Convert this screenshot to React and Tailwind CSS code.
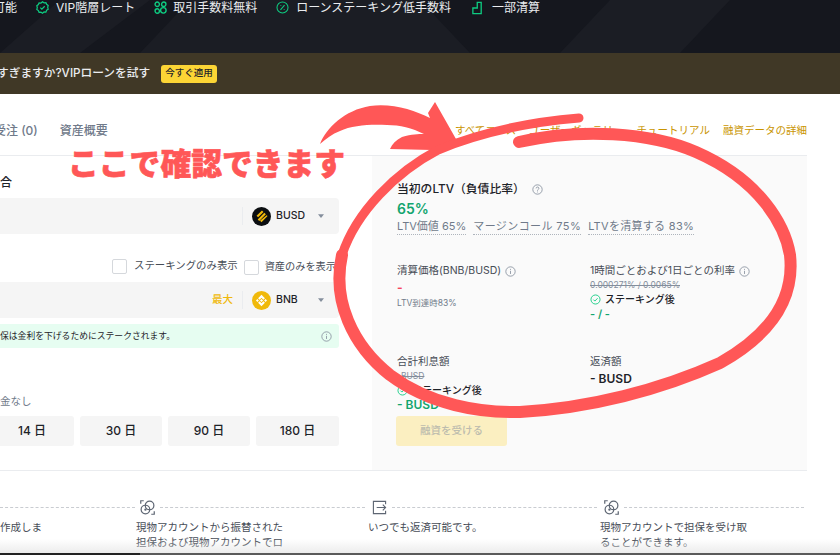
import React from "react";

const Check = ({ className = "w-[13px] h-[13px]" }) => (
  <svg viewBox="0 0 16 16" className={className} fill="none" stroke="#0ecb81" strokeWidth="1.3">
    <circle cx="8" cy="8" r="6.6" />
    <path d="M5 8.2l2.1 2.1L11 6.2" />
  </svg>
);
const Info = ({ q }) => (
  <svg viewBox="0 0 16 16" className="w-[11px] h-[11px] shrink-0" fill="none" stroke="#848e9c" strokeWidth="1.2">
    <circle cx="8" cy="8" r="6.8" />
    {q ? (
      <path d="M6 6.4a2 2 0 1 1 3 1.7c-.7.4-1 .8-1 1.6M8 11v1.2" />
    ) : (
      <path d="M8 7v4.6M8 4.2v1.4" />
    )}
  </svg>
);
const Caret = () => (
  <svg viewBox="0 0 8 5" className="w-[6px] h-[4px]">
    <path d="M0 0h8L4 5z" fill="#848e9c" />
  </svg>
);
const Busd = () => (
  <svg viewBox="0 0 20 20" className="w-[19px] h-[19px]">
    <circle cx="10" cy="10" r="10" fill="#0b0e11" />
    <path d="M10.500 3.600l1.600 1.600-5.700 5.700-1.600-1.600zM13 6.100l1.600 1.600-7 7L6 13.100zM15.400 8.600l1 1-6.400 6.400-1.600-1.600z" fill="#f0b90b" />
  </svg>
);
const Bnb = () => (
  <svg viewBox="0 0 20 20" className="w-[19px] h-[19px]">
    <circle cx="10" cy="10" r="10" fill="#f0b90b" />
    <path d="M10 4l1.600 1.600L8 9.200 6.400 7.600zM10 4l3.600 3.600-1.600 1.600-3.600-3.600zM4.200 10l1.500-1.500L7.200 10l-1.500 1.500zM12.800 10l1.500-1.500 1.500 1.500-1.500 1.500zM10 8.400l1.600 1.600-1.600 1.600L8.400 10zM6.400 12.400L8 10.800l2 2 2-2 1.600 1.600L10 16z" fill="#fff" />
  </svg>
);
const Swap = () => (
  <svg viewBox="0 0 16 16" className="w-[15px] h-[15px] shrink-0" fill="none" stroke="#5e6673" strokeWidth="1.300">
    <circle cx="10.200" cy="5.800" r="4.600" />
    <circle cx="5.800" cy="10.200" r="4.600" />
    <circle cx="5.800" cy="10.200" r=".6" fill="#5e6673" />
    <path d="M.8 4V.8h3.200M15.200 12v3.200H12" />
  </svg>
);
const Exit = () => (
  <svg viewBox="0 0 16 16" className="w-[15px] h-[15px] shrink-0" fill="none" stroke="#5e6673" strokeWidth="1.200">
    <path d="M14.500 4.500V1.500h-13v13h13v-3M5 8h9.500M11.500 5l3 3-3 3" />
  </svg>
);

const Topic = ({ icon, gap, children }) => (
  <div className={`flex items-center ${gap}`}>
    {icon}
    <span>{children}</span>
  </div>
);

const After = () => (
  <div className="flex items-center gap-[4px] text-[10px] font-medium text-[#1e2329] leading-[15px]">
    <Check className="w-[11px] h-[11px]" />
    <span>ステーキング後</span>
  </div>
);

const Step = ({ icon, children }) => (
  <div>
    <div className="flex items-center h-[15px] pl-[4px]">
      {icon}
      <div className="flex-1 ml-[5px] mr-[3px] border-t border-dashed border-[#c9ccd1]" />
    </div>
    <div className="mt-[5px] text-[10.500px] leading-[15px] text-[#474d57] whitespace-nowrap">{children}</div>
  </div>
);

const Term = ({ children, className }) => (
  <div className={`h-[30px] rounded-[3px] bg-[#f5f5f5] flex items-center justify-center text-[12px] font-medium text-[#1e2329] ${className}`}>
    {children}
  </div>
);

export default function App() {
  return (
    <div className="relative w-[840px] h-[560px] overflow-hidden bg-white font-['Inter','Noto_Sans_CJK_JP',sans-serif]">
      {/* Hero */}
      <div className="relative h-[53px] bg-[#15171e] overflow-hidden">
        <svg className="absolute inset-0 w-full h-full" viewBox="0 0 840 53">
          <path d="M0 53L60 0h90L80 53zM140 53l50-53h230L470 53zM560 53L610 0h120l-50 53z" fill="#1b1d24" />
        </svg>
        <div className="relative flex items-center gap-[19px] -ml-[7px] h-[15px] text-[12px] leading-[15px] text-[#eaecef]">
          <span className="w-[24px]">可能</span>
          <Topic
            gap="gap-[7px]"
            icon={
              <svg viewBox="0 0 16 16" className="w-[13px] h-[13px]" fill="none" stroke="#0ecb81" strokeWidth="1.500">
                <path d="M8 1l1.900 1.200 2.300-.1.900 2 1.900 1.400-.6 2.300.6 2.300-1.900 1.300-.9 2.200-2.300-.1L8 15l-1.900-1.200-2.300.1-.9-2.100L1 10.400l.6-2.300L1 5.800l1.900-1.400.9-2 2.300.1z" />
                <path d="M5.300 8.200l1.900 1.900 3.500-3.600" />
              </svg>
            }
          >
            VIP階層レート
          </Topic>
          <Topic
            gap="gap-[6px]"
            icon={
              <svg viewBox="0 0 16 16" className="w-[13px] h-[13px]" fill="none" stroke="#0ecb81" strokeWidth="1.700">
                <circle cx="4" cy="4" r="2.700" />
                <circle cx="12" cy="4" r="2.700" />
                <circle cx="4" cy="12.300" r="2.700" />
                <circle cx="11.500" cy="11.500" r="3.400" />
              </svg>
            }
          >
            取引手数料無料
          </Topic>
          <Topic
            gap="gap-[7px]"
            icon={
              <svg viewBox="0 0 16 16" className="w-[13px] h-[13px]" fill="none" stroke="#0ecb81" strokeWidth="1.300">
                <circle cx="8" cy="8" r="6.800" />
                <path d="M10.500 5l-5 6M5.500 5.500h1M9.500 10.500h1" />
              </svg>
            }
          >
            ローンステーキング低手数料
          </Topic>
          <div className="ml-[2px]">
            <Topic
              gap="gap-[6px]"
              icon={
                <svg viewBox="0 0 16 16" className="w-[14px] h-[14px]" fill="none" stroke="#0ecb81" strokeWidth="1.500">
                  <path d="M1 14.500h9.500V1.500H6v6.500H1z" />
                </svg>
              }
            >
              一部清算
            </Topic>
          </div>
        </div>
      </div>

      {/* Banner */}
      <div className="relative h-[41px] bg-[#403826] flex items-center gap-[11px] -ml-[3px] text-[11.700px] font-medium text-[#eaecef]">
        <span>すぎますか?VIPローンを試す</span>
        <div className="h-[18px] w-[56px] rounded-[3px] bg-[#fcd535] flex items-center justify-center text-[9.500px] font-medium text-[#1e2329]">
          今すぐ適用
        </div>
      </div>

      {/* Tabs */}
      <div className="w-[807px] h-[62px] pt-[28px] flex justify-between border-b border-[#eaecef]">
        <div className="-ml-[6px] flex gap-[22px] text-[12px] leading-[18px] font-medium text-[#707a8a]">
          <span>受注 (0)</span>
          <span>資産概要</span>
        </div>
        <div className="flex gap-[13px] text-[10.500px] leading-[18px] text-[#c99400]">
          <span>すべてコース</span>
          <span>ユーザーギャラリー</span>
          <span>チュートリアル</span>
          <span>融資データの詳細</span>
        </div>
      </div>

      {/* Main */}
      <div className="w-[807px] h-[315px] flex gap-[33px] border-b border-[#eaecef]">
        <div className="w-[339px] shrink-0 pt-[19px]">
          <div className="text-[12px] leading-[16px] font-medium text-[#1e2329]">合</div>
          <div className="mt-[7px] h-[36px] rounded-r-[4px] bg-[#f5f5f5] flex items-center justify-end">
            <div className="w-px h-[18px] bg-[#eaecef]" />
            <div className="ml-[9px]"><Busd /></div>
            <span className="ml-[5px] w-[42px] text-[10.500px] font-medium text-[#1e2329]">BUSD</span>
            <div className="mr-[15px] flex"><Caret /></div>
          </div>
          <div className="mt-[24px] h-[16px] flex items-center justify-end text-[10.400px] text-[#474d57] whitespace-nowrap">
            <span className="w-[15px] h-[15px] rounded-[2px] border border-[#d5d8dc] bg-white" />
            <span className="ml-[7px] mr-[6px]">ステーキングのみ表示</span>
            <span className="mt-[2px] w-[15px] h-[15px] rounded-[2px] border border-[#d5d8dc] bg-white" />
            <span className="mt-[2px] ml-[6px] mr-[3px] text-[10.200px]">資産のみを表示</span>
          </div>
          <div className="mt-[8px] h-[36px] rounded-r-[4px] bg-[#f5f5f5] flex items-center justify-end">
            <span className="mr-[9px] text-[10.500px] font-medium text-[#f0b90b]">最大</span>
            <div className="w-px h-[18px] bg-[#eaecef]" />
            <div className="ml-[9px]"><Bnb /></div>
            <span className="ml-[5px] w-[42px] text-[10.500px] font-medium text-[#1e2329]">BNB</span>
            <div className="mr-[15px] flex"><Caret /></div>
          </div>
          <div className="mt-[6px] h-[24px] rounded-r-[3px] bg-[#e6fdf1] flex items-center justify-between pr-[7px] text-[8.800px] text-[#1e2329]">
            <span>保は金利を下げるためにステークされます。</span>
            <Info />
          </div>
          <div className="mt-[46px] text-[10.500px] leading-[16px] text-[#707a8a]">金なし</div>
          <div className="mt-[6px] flex gap-[6px] -ml-[10px]">
            <Term className="w-[84px]">14 日</Term>
            <Term className="w-[82px]">30 日</Term>
            <Term className="w-[82px]">90 日</Term>
            <Term className="w-[83px]">180 日</Term>
          </div>
        </div>

        <div className="flex-1 bg-[#fafafa] pl-[25px] pt-[25px]">
          <div className="flex items-center gap-[7px] text-[11.800px] leading-[16px] font-medium text-[#1e2329]">
            <span>当初のLTV（負債比率）</span>
            <Info q />
          </div>
          <div className="mt-[3px] text-[14px] leading-[18px] font-semibold text-[#12a56f]">65%</div>
          <div className="mt-[1px] flex gap-[7px] text-[11px] leading-[15px] text-[#707a8a]">
            <span className="border-b border-dotted border-[#aeb4bc]">LTV価値 65%</span>
            <span className="border-b border-dotted border-[#aeb4bc] tracking-[0.4px]">マージンコール 75%</span>
            <span className="border-b border-dotted border-[#aeb4bc] tracking-[0.3px]">LTVを清算する 83%</span>
          </div>
          <div className="mt-[28px] grid grid-cols-[193px_1fr] h-[91px]">
            <div>
              <div className="flex items-center gap-[4px] text-[10.500px] leading-[16px] text-[#474d57]">
                <span>清算価格(BNB/BUSD)</span>
                <Info />
              </div>
              <div className="mt-[1px] text-[12px] leading-[16px] font-bold text-[#f6465d]">-</div>
              <div className="text-[8.500px] leading-[14px] text-[#707a8a]">LTV到達時83%</div>
            </div>
            <div>
              <div className="flex items-center gap-[4px] text-[10.500px] leading-[16px] text-[#474d57]">
                <span>1時間ごとおよび1日ごとの利率</span>
                <Info />
              </div>
              <div className="text-[8.500px] leading-[13px] text-[#848e9c] line-through">0.000271% / 0.0065%</div>
              <After />
              <div className="text-[11px] leading-[15px] font-semibold text-[#12a56f]">- / -</div>
            </div>
          </div>
          <div className="grid grid-cols-[193px_1fr]">
            <div>
              <div className="text-[10.500px] leading-[16px] text-[#474d57]">合計利息額</div>
              <div className="text-[8.500px] leading-[13px] text-[#848e9c] line-through">-BUSD</div>
              <After />
              <div className="-mt-[1px] text-[12px] leading-[15px] font-semibold text-[#12a56f]">- BUSD</div>
            </div>
            <div>
              <div className="text-[10.500px] leading-[16px] text-[#474d57]">返済額</div>
              <div className="text-[12px] leading-[17px] font-semibold text-[#1e2329]">- BUSD</div>
            </div>
          </div>
          <div className="mt-[4px] -ml-[1px] w-[111px] h-[30px] rounded-[3px] bg-[#fbefc1] flex items-center justify-center text-[10.500px] font-medium text-[#bdbcae]">
            融資を受ける
          </div>
        </div>
      </div>

      {/* Steps */}
      <div className="w-[807px] h-[82px] pt-[29px] grid grid-cols-[136px_232px_232px_1fr] overflow-hidden">
        <div>
          <div className="flex items-center h-[15px]">
            <div className="flex-1 mr-[1px] border-t border-dashed border-[#c9ccd1]" />
          </div>
          <div className="mt-[5px] text-[10.500px] leading-[15px] text-[#474d57]">作成しま</div>
        </div>
        <Step icon={<Swap />}>
          現物アカウントから振替された
          <br />
          担保および現物アカウントでロ
        </Step>
        <Step icon={<Exit />}>いつでも返済可能です。</Step>
        <Step icon={<Swap />}>
          現物アカウントで担保を受け取
          <br />
          ることができます。
        </Step>
      </div>
      <div className="h-[2px] bg-[#5a5a5a]" />

      {/* Bottom fade over the cut-off screenshot */}
      <div className="absolute left-0 right-0 top-[539px] h-[14px] bg-gradient-to-b from-white/0 to-[#e4e4e4]/70" />
      <div className="absolute left-0 top-[553px] w-[140px] h-[2px] bg-[#222]" />

      {/* Hand annotation */}
      <svg className="absolute inset-0 w-[840px] h-[560px]" viewBox="0 0 840 560" fill="none">
        <path
          d="M320 144C326 128 345 110 370 106C392 103 414 110 430 118L428 113L435 102L456 139C448 145 440 148 432 150C418 150 404 149 390 149C392 144 396 140 402 137C412 134 418 134 424 134C412 128 400 125 387 125C372 124 352 125 340 131C332 134 326 139 320 144Z"
          fill="#ff5757"
        />
        <path
          d="M579 118C530 122 482 132 438 150C396 172 356 212 342 255"
          stroke="#ff5757"
          strokeWidth="9"
          strokeLinecap="round"
        />
        <path
          d="M342 255C332 300 352 345 390 375C430 405 480 413 520 412C590 408 660 390 720 363C770 335 795 300 790 255C785 225 760 180 696 152C650 132 580 128 519 142"
          stroke="#ff5757"
          strokeWidth="12"
          strokeLinecap="round"
        />
      </svg>
      <div className="absolute left-[68px] top-[141px] text-[30.800px] leading-[42px] font-black text-[#ff5757] whitespace-nowrap [-webkit-text-stroke:0.6px_#ff5757] font-['Noto_Sans_CJK_JP',sans-serif]">
        ここで確認できます
      </div>
    </div>
  );
}
